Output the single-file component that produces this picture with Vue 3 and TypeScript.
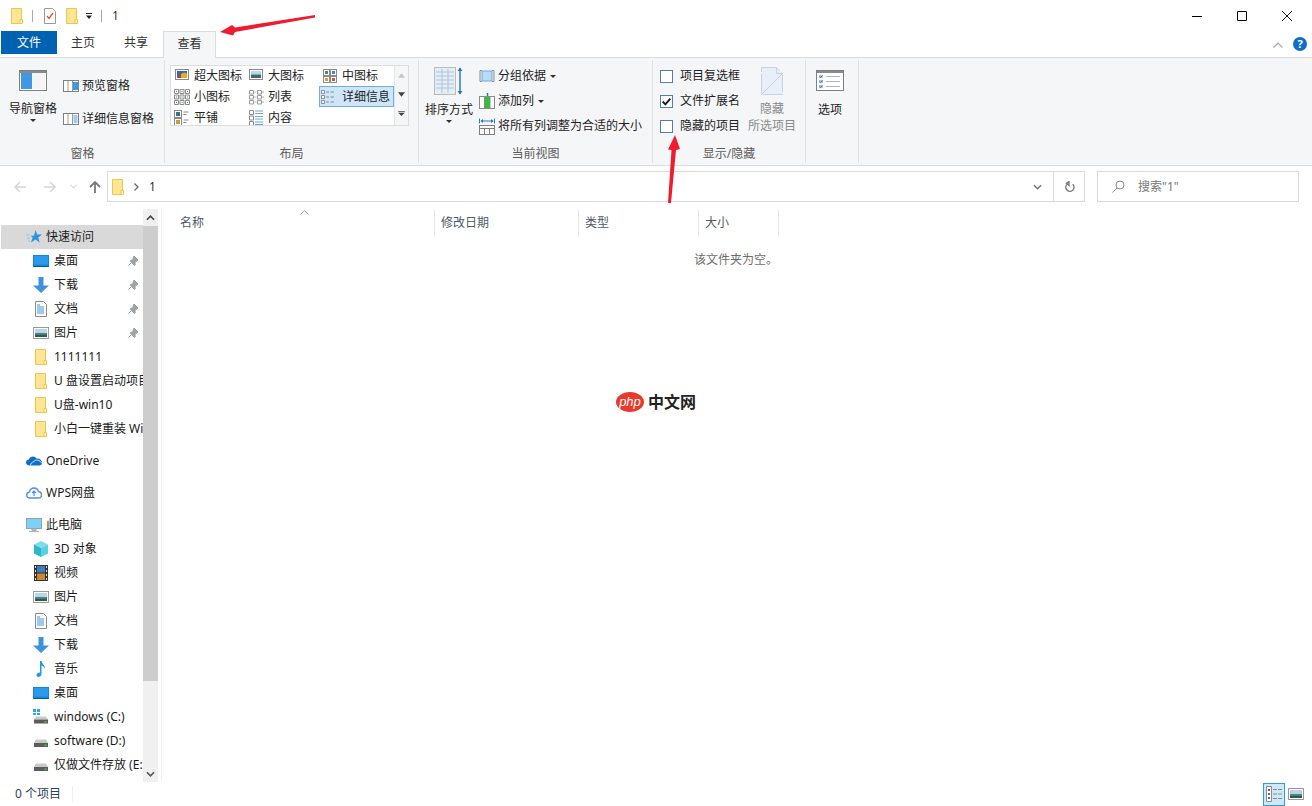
<template>
  <div class="explorer">
    <!-- shared icons -->
    <svg class="defs" aria-hidden="true">
      <symbol id="folder" viewBox="0 0 16 16">
        <path d="M2.5 .5h10v15h-10z" fill="#ffe694" stroke="#eac550" />
        <path d="M11 15.5v-4h2.5v4z" fill="#fff3c4" stroke="#eac550" />
      </symbol>
      <symbol id="desktop" viewBox="0 0 16 16">
        <rect x="0" y="2" width="16" height="11" fill="#0f86e0" />
        <rect x="1" y="3" width="14" height="8.5" fill="#2a9bec" />
        <path d="M0 13h16v1H0z" fill="#0a5a9c" />
      </symbol>
      <symbol id="download" viewBox="0 0 16 16">
        <path d="M5.5 0h5v8.5H16L8 16 0 8.5h5.5z" fill="#3f92de" />
      </symbol>
      <symbol id="doc" viewBox="0 0 16 16">
        <path d="M2.5 .5h8l3 3v12h-11z" fill="#fff" stroke="#8a8a8a" />
        <path d="M4 4h3M4 6h7M4 8h7M4 10h7M4 12h7" stroke="#3a94dc" fill="none" />
      </symbol>
      <symbol id="pic" viewBox="0 0 16 16">
        <rect x=".5" y="2.5" width="15" height="11" fill="#fff" stroke="#9a9a9a" />
        <rect x="2" y="4" width="12" height="4" fill="#b5d6ee" />
        <rect x="2" y="8" width="12" height="2" fill="#4f7f77" />
        <rect x="2" y="10" width="12" height="2" fill="#2d5a4c" />
      </symbol>
      <symbol id="pin" viewBox="0 0 12 12">
        <path d="M7 1l4 4-1 .5-2 2 .2 2.3-1 .5-4-4 .5-1L6 5l.5-3zM4.5 7.5L1.5 10.5" fill="#9aa1a8" stroke="#9aa1a8" />
      </symbol>
      <symbol id="star" viewBox="0 0 16 16">
        <path d="M9.5 1l1.7 4.5H16l-3.8 3 1.5 5-4.2-3-4.5 3 1.7-5-2.2-1.7h3.5z" fill="#2f93e3" />
        <path d="M0 6h4M1 9h3M2 12h2" stroke="#8fc6f2" />
      </symbol>
      <symbol id="onedrive" viewBox="0 0 16 16">
        <path d="M4 12.5c-2.5 0-4-1.2-4-3 0-1.5 1-2.5 2.5-2.7C3.2 4.8 5 3.5 7 3.5c1.5 0 2.8.7 3.5 2C13.5 5 16 7 16 9.8c0 1.7-1 2.7-2.5 2.7z" fill="#0f6fc6" />
        <path d="M4.5 12.5c0-2 1.5-3.5 3-3.5.8-1.5 2.5-2.3 4-1.8 2 .3 3.5 1.5 4 3" fill="none" stroke="#fff" stroke-width=".8" />
      </symbol>
      <symbol id="wps" viewBox="0 0 16 16">
        <path d="M4 13c-2 0-3.3-1.3-3.3-3 0-1.6 1.1-2.8 2.6-3C4 4.5 6 3 8 3s3.9 1.4 4.5 3.5c1.8.2 3 1.7 3 3.4 0 1.8-1.4 3.1-3.3 3.1z" fill="#fff" stroke="#4f8fe6" stroke-width="1.4" />
        <path d="M8 6v5M6 8l2-2 2 2" fill="none" stroke="#4f8fe6" stroke-width="1.2" />
      </symbol>
      <symbol id="pc" viewBox="0 0 16 16">
        <rect x=".5" y="1.5" width="15" height="10" fill="#7fd0f5" stroke="#8aa4b5" />
        <path d="M6 12h4v2H6zM3 14.5h10" fill="#a8b4bc" stroke="#a8b4bc" />
      </symbol>
      <symbol id="cube" viewBox="0 0 16 16">
        <path d="M8 0l7 3.5-7 3.5-7-3.5z" fill="#7fdcec" />
        <path d="M1 3.5l7 3.5v9l-7-3.5z" fill="#2cb6cc" />
        <path d="M15 3.5l-7 3.5v9l7-3.5z" fill="#5ccfe0" />
      </symbol>
      <symbol id="video" viewBox="0 0 16 16">
        <rect x="1" y="0" width="14" height="16" fill="#333" />
        <path d="M2 1h1v2H2zM2 5h1v2H2zM2 9h1v2H2zM2 13h1v2H2zM13 1h1v2h-1zM13 5h1v2h-1zM13 9h1v2h-1zM13 13h1v2h-1z" fill="#ddd" />
        <rect x="4" y="1" width="8" height="6.5" fill="#3c7ec0" />
        <rect x="4" y="8.5" width="8" height="6.5" fill="#d0852e" />
      </symbol>
      <symbol id="music" viewBox="0 0 16 16">
        <path d="M7 0h1.5c.3 3 4 4 3.5 8-.5-2-2-3-3.5-3.3V13c0 1.8-1.5 3-3.2 3C4.3 16 3.5 15.2 3.5 14c0-1.6 1.8-2.8 3.5-2.5z" fill="#1c9be6" />
      </symbol>
      <symbol id="disk" viewBox="0 0 16 16">
        <path d="M3 6.5h10l2 3.5H1z" fill="#c9c9c9" />
        <rect x="1" y="10" width="14" height="4" fill="#5c5c5c" />
        <rect x="11.5" y="11.5" width="2" height="1.5" fill="#37d04a" />
      </symbol>
      <symbol id="windisk" viewBox="0 0 16 16">
        <path d="M0 0h3v3H0zM4 0h3v3H4zM0 4h3v2H0zM4 4h3v2H4z" fill="#27a6ef" />
        <path d="M3 7.5h10l2 3H1z" fill="#c9c9c9" />
        <rect x="1" y="10.5" width="14" height="4" fill="#5c5c5c" />
        <rect x="11.5" y="12" width="2" height="1.5" fill="#37d04a" />
      </symbol>
      <symbol id="g-xl" viewBox="0 0 16 16">
        <rect x="1.5" y="1.5" width="13" height="10" fill="#fff" stroke="#8a8a8a" />
        <rect x="3" y="3" width="10" height="7" fill="#3767b0" />
        <path d="M3 10l2-3 2 1v2z" fill="#c83a2c" />
        <path d="M7 10V6l3-1.5 3 1V10z" fill="#e4b020" />
      </symbol>
      <symbol id="g-l" viewBox="0 0 16 16">
        <rect x="1.5" y="1.5" width="13" height="10" fill="#fff" stroke="#8a8a8a" />
        <rect x="3" y="3" width="10" height="3.5" fill="#b8d8ef" />
        <rect x="3" y="6.5" width="10" height="3.5" fill="#3f6d60" />
      </symbol>
      <symbol id="g-m" viewBox="0 0 16 16">
        <rect x="1.5" y="1.5" width="6" height="6" fill="#fff" stroke="#8a8a8a" />
        <rect x="8.5" y="1.5" width="6" height="6" fill="#fff" stroke="#8a8a8a" />
        <rect x="1.5" y="8.5" width="6" height="6" fill="#fff" stroke="#8a8a8a" />
        <rect x="8.5" y="8.5" width="6" height="6" fill="#fff" stroke="#8a8a8a" />
        <path d="M3 3h3v3H3z" fill="#4d8a6e" />
        <path d="M10 3h3v3h-3z" fill="#4a84c8" />
        <path d="M3 10h3v3H3z" fill="#d8a33a" />
        <path d="M10 10h3v3h-3z" fill="#c9553c" />
      </symbol>
      <symbol id="g-s" viewBox="0 0 16 16">
        <path d="M.5.5h4v4h-4zM6 .5h4v4H6zM11.5 .5h4v4h-4zM.5 6h4v4h-4zM6 6h4v4H6zM11.5 6h4v4h-4zM.5 11.5h4v4h-4zM6 11.5h4v4H6zM11.5 11.5h4v4h-4z" fill="#fff" stroke="#8a8a8a" />
        <path d="M2 2h1v1H2zM7.5 2h1v1h-1zM13 2h1v1h-1zM2 7.5h1v1H2zM7.5 7.5h1v1h-1zM13 7.5h1v1h-1zM2 13h1v1H2zM7.5 13h1v1h-1zM13 13h1v1h-1z" fill="#55729a" />
      </symbol>
      <symbol id="g-list" viewBox="0 0 16 16">
        <path d="M1.5 1.5h4V5h-4zM1.5 6.5h4V10h-4zM1.5 11.5h4V15h-4zM9.5 1.5h4V5h-4zM9.5 6.5h4V10h-4zM9.5 11.5h4V15h-4z" fill="#fff" stroke="#9a9a9a" />
        <path d="M6.5 3h2M6.5 8h2M6.5 13h2M14 3h2M14 8h2M14 13h2" stroke="#b0b0b0" />
      </symbol>
      <symbol id="g-detail" viewBox="0 0 16 16">
        <path d="M1.5 1.5h3v3h-3zM1.5 6.5h3v3h-3zM1.5 11.5h3v3h-3z" fill="#fff" stroke="#8a8a8a" />
        <path d="M6 3h3M10.5 3H14M6 8h3M10.5 8H14M6 13h3M10.5 13H14" stroke="#8a8a8a" />
      </symbol>
      <symbol id="g-tile" viewBox="0 0 16 16">
        <rect x=".5" y=".5" width="7" height="7" fill="#fff" stroke="#8a8a8a" />
        <rect x=".5" y="8.5" width="7" height="7" fill="#fff" stroke="#8a8a8a" />
        <path d="M2 2h4v4H2z" fill="#3f6d8a" />
        <path d="M2 10h4v4H2z" fill="#cc9a3a" />
        <path d="M9.5 2h5M9.5 4.5h3M9.5 10h5M9.5 12.5h3" stroke="#8a8a8a" />
      </symbol>
      <symbol id="g-content" viewBox="0 0 16 16">
        <path d="M1.5 .5h4v4h-4zM1.5 6h4v4h-4zM1.5 11.5h4v4h-4z" fill="#fff" stroke="#8a8a8a" />
        <path d="M7 1h8M7 3.5h8M7 6.5h8M7 9h8M7 12h8M7 14.5h8" stroke="#6aa6dc" />
      </symbol>
    </svg>

    <header class="titlebar">
      <svg class="qa-icon"><use href="#folder" /></svg>
      <span class="qa-sep" />
      <svg class="qa-icon check-doc" viewBox="0 0 16 16">
        <path d="M2.5 .5h8l3 3v12h-11z" fill="#fff" stroke="#9a9a9a" />
        <path d="M5 8l2 2.5L11 5" fill="none" stroke="#e0532a" stroke-width="1.3" />
      </svg>
      <svg class="qa-icon second"><use href="#folder" /></svg>
      <svg class="qa-drop" viewBox="0 0 8 8">
        <path d="M1 1h6v1H1zM1 3.5h6L4 7z" fill="#222" />
      </svg>
      <span class="qa-sep last" />
      <span class="title">1</span>
      <div class="win-btns">
        <svg viewBox="0 0 10 10"><path d="M0 5.5h10" stroke="#000" /></svg>
        <svg viewBox="0 0 10 10"><path d="M.5.5h9v9h-9z" fill="none" stroke="#000" /></svg>
        <svg viewBox="0 0 10 10"><path d="M0 0l10 10M10 0L0 10" stroke="#000" stroke-width=".9" /></svg>
      </div>
    </header>

    <nav class="tabs">
      <span class="tab file">文件</span>
      <span class="tab home">主页</span>
      <span class="tab share">共享</span>
      <span class="tab active">查看</span>
      <svg class="collapse" viewBox="0 0 10 6"><path d="M.5 5.5L5 1l4.5 4.5" fill="none" stroke="#a8a8a8" stroke-width="1.2" /></svg>
      <span class="help">?</span>
    </nav>

    <section class="ribbon">
      <div class="group g-pane">
        <div class="group-body">
          <div class="big nav-btn">
            <svg class="big-icon" viewBox="0 0 28 21" width="28" height="21">
              <rect x=".5" y=".5" width="27" height="20" fill="#fff" stroke="#7f7f7f" />
              <rect x="1" y="1" width="26" height="2" fill="#8a8a8a" />
              <rect x="2" y="3" width="11" height="16" fill="#3f97e5" />
              <rect x="13" y="3" width="13" height="16" fill="#f4f4f4" />
            </svg>
            <span class="big-label">导航窗格</span>
            <i class="caret" />
          </div>
          <div class="pane-list">
            <div class="small-item">
              <svg viewBox="0 0 16 12" width="16" height="12">
                <rect x=".5" y=".5" width="15" height="11" fill="#fff" stroke="#7f7f7f" />
                <rect x="10" y="2" width="5" height="8" fill="#3f97e5" />
                <path d="M5 1v10M9.5 1v10" stroke="#9a9a9a" />
              </svg>
              <span>预览窗格</span>
            </div>
            <div class="small-item">
              <svg viewBox="0 0 16 12" width="16" height="12">
                <rect x=".5" y=".5" width="15" height="11" fill="#fff" stroke="#7f7f7f" />
                <path d="M5 1v10M9.5 1v10" stroke="#9a9a9a" />
                <path d="M10.5 3h4M10.5 5h4M10.5 7h4M10.5 9h4" stroke="#3f97e5" />
              </svg>
              <span>详细信息窗格</span>
            </div>
          </div>
        </div>
        <div class="group-label">窗格</div>
      </div>

      <div class="group g-layout">
        <div class="group-body">
          <div class="gallery">
            <div class="gallery-grid">
              <div v-for="g in layouts" :key="g.label" class="gallery-item" :class="{ selected: g.selected }">
                <svg class="g-icon"><use :href="'#' + g.icon" /></svg>
                <span>{{ g.label }}</span>
              </div>
            </div>
            <div class="gallery-scroll">
              <svg viewBox="0 0 8 5" class="off"><path d="M4 0l4 5H0z" fill="#c4c4c4" /></svg>
              <svg viewBox="0 0 8 5"><path d="M0 0h8L4 5z" fill="#444" /></svg>
              <svg viewBox="0 0 8 6"><path d="M0 0h8v1H0zM0 2h8L4 6z" fill="#444" /></svg>
            </div>
          </div>
        </div>
        <div class="group-label">布局</div>
      </div>

      <div class="group g-view">
        <div class="group-body">
          <div class="big sort-btn">
            <svg viewBox="0 0 30 28" width="30" height="28">
              <rect x=".5" y=".5" width="21" height="27" fill="#e6eef4" stroke="#b5bcc2" />
              <path d="M2 5h18M2 9h18M2 13h18M2 17h18M2 21h18M8 2v24M14 2v24" stroke="#a9c6da" />
              <path d="M26 1v26" stroke="#2b78c2" stroke-width="1.5" />
              <path d="M23.5 4L26 .5 28.5 4zM23.5 24L26 27.5 28.5 24z" fill="#2b78c2" />
            </svg>
            <span class="big-label">排序方式</span>
            <i class="caret" />
          </div>
          <div class="view-list">
            <div class="small-item">
              <svg viewBox="0 0 16 16" width="16" height="16">
                <path d="M3 2.5H1v11h2M13 2.5h2v11h-2" fill="none" stroke="#8a8a8a" />
                <rect x="3" y="3" width="10" height="10" fill="#b9dcf6" stroke="#6ca8dc" />
              </svg>
              <span>分组依据</span>
              <i class="caret inline" />
            </div>
            <div class="small-item">
              <svg viewBox="0 0 16 16" width="16" height="16">
                <rect x=".5" y="3.5" width="15" height="12" fill="#fff" stroke="#8a8a8a" />
                <rect x="6" y="4" width="5" height="11" fill="#2fc239" />
                <path d="M5.5 4v11M11 4v11" stroke="#8a8a8a" />
                <path d="M8.5 0v3" stroke="#2b78c2" stroke-width="1.5" />
              </svg>
              <span>添加列</span>
              <i class="caret inline" />
            </div>
            <div class="small-item">
              <svg viewBox="0 0 16 17" width="16" height="17">
                <path d="M.5 .5v5M15.5 .5v5M2 3h12" stroke="#2b78c2" fill="none" />
                <path d="M4 1L1.5 3 4 5zM12 1l2.5 2L12 5z" fill="#2b78c2" />
                <rect x=".5" y="7.5" width="15" height="9" fill="#fff" stroke="#7f7f7f" />
                <path d="M1 10.5h14M5.5 11v5M10.5 11v5" stroke="#7f7f7f" />
              </svg>
              <span>将所有列调整为合适的大小</span>
            </div>
          </div>
        </div>
        <div class="group-label">当前视图</div>
      </div>

      <div class="group g-show">
        <div class="group-body">
          <div class="check-list">
            <label v-for="c in checks" :key="c.label" class="check-row">
              <span class="box">
                <svg v-if="c.on" viewBox="0 0 13 13" width="11" height="11"><path d="M2 6.5l3.2 3.3L11 3" fill="none" stroke="#1a1a1a" stroke-width="2.2" /></svg>
              </span>
              <span>{{ c.label }}</span>
            </label>
          </div>
          <div class="hide-sel">
            <svg viewBox="0 0 22 28" width="22" height="28">
              <path d="M.5 .5h15l6 6v21H.5z" fill="#e8eff9" stroke="#c8d2e2" stroke-dasharray="20 2" />
              <path d="M15.5 .5v6h6M.5 27.5L21 7" fill="none" stroke="#c8d2e2" />
            </svg>
            <span class="hide-a">隐藏</span>
            <span class="hide-b">所选项目</span>
          </div>
        </div>
        <div class="group-label">显示/隐藏</div>
      </div>

      <div class="group g-opt">
        <div class="group-body">
          <div class="big opt-btn">
            <svg viewBox="0 0 28 21" width="28" height="21">
              <rect x=".5" y=".5" width="27" height="20" fill="#fff" stroke="#7f7f7f" />
              <rect x="1" y="1" width="26" height="2" fill="#8a8a8a" />
              <path d="M3 5h4v3H3zM3 10h4v3H3zM3 15h4v3H3z" fill="#9cc6ec" />
              <path d="M3.5 6.5l1 1 2-2M3.5 11.5l1 1 2-2M3.5 16.5l1 1 2-2" fill="none" stroke="#2b78c2" />
              <path d="M10 6.5h14M10 11.5h14M10 16.5h14" stroke="#b5b5b5" />
            </svg>
            <span class="big-label">选项</span>
          </div>
        </div>
      </div>
    </section>

    <section class="addressbar">
      <div class="arrows">
        <svg viewBox="0 0 12 12" width="12" height="12"><path d="M12 6H1M6 1L1 6l5 5" fill="none" stroke="#d6d6d6" stroke-width="1.5" /></svg>
        <svg viewBox="0 0 12 12" width="12" height="12"><path d="M0 6h11M6 1l5 5-5 5" fill="none" stroke="#d6d6d6" stroke-width="1.5" /></svg>
        <svg viewBox="0 0 8 5" width="7" height="5"><path d="M.5.5L4 4 7.5.5" fill="none" stroke="#d6d6d6" stroke-width="1.2" /></svg>
        <svg viewBox="0 0 12 12" width="12" height="12"><path d="M6 12V1M1 6l5-5 5 5" fill="none" stroke="#7a7a7a" stroke-width="1.8" /></svg>
      </div>
      <div class="path-box">
        <svg class="path-folder"><use href="#folder" /></svg>
        <svg class="crumb" viewBox="0 0 5 8" width="5" height="8"><path d="M.5.5L4 4 .5 7.5" fill="none" stroke="#666" stroke-width="1.2" /></svg>
        <span class="path-text">1</span>
        <span class="path-drop">
          <svg viewBox="0 0 10 6" width="9" height="6"><path d="M1 1l4 4 4-4" fill="none" stroke="#777" stroke-width="1.6" /></svg>
        </span>
        <span class="path-refresh">
          <svg viewBox="0 0 12 12" width="11" height="12"><path d="M4.5 2.2A4.5 4.5 0 1 0 9.5 3M5.5 0v4.2L2.8 2z" fill="none" stroke="#7a7a7a" stroke-width="1.5" /></svg>
        </span>
      </div>
      <div class="search-box">
        <svg viewBox="0 0 13 13" width="13" height="13"><circle cx="8" cy="5" r="4" fill="none" stroke="#8a8a8a" /><path d="M5 8L.5 12.5" stroke="#8a8a8a" /></svg>
        <span>搜索"1"</span>
      </div>
    </section>

    <main class="content">
      <aside class="nav">
        <div class="nav-list">
          <div
            v-for="(item, i) in navItems"
            :key="i"
            class="nav-row"
            :class="[item.level === 1 ? 'top' : 'sub', { current: item.current, spaced: item.spaced }]"
          >
            <svg class="nav-icon"><use :href="'#' + item.icon" /></svg>
            <span>{{ item.label }}</span>
            <svg v-if="item.pinned" class="pin"><use href="#pin" /></svg>
          </div>
        </div>
        <div class="scrollbar">
          <div class="sb-btn">
            <svg viewBox="0 0 10 6" width="9" height="6"><path d="M1 5l4-4 4 4" fill="none" stroke="#444" stroke-width="1.8" /></svg>
          </div>
          <div class="sb-thumb" />
          <div class="sb-track" />
          <div class="sb-btn">
            <svg viewBox="0 0 10 6" width="9" height="6"><path d="M1 1l4 4 4-4" fill="none" stroke="#555" stroke-width="1.8" /></svg>
          </div>
        </div>
      </aside>
      <div class="files">
        <div class="file-head">
          <div v-for="col in columns" :key="col" class="col">{{ col }}</div>
          <svg class="sort-mark" viewBox="0 0 9 5" width="9" height="5"><path d="M.5 4.5l4-4 4 4" fill="none" stroke="#9a9a9a" /></svg>
        </div>
        <p class="empty">该文件夹为空。</p>
      </div>
    </main>

    <footer class="statusbar">
      <span class="count">0 个项目</span>
      <span class="status-sep" />
      <div class="view-btns">
        <span class="vb on">
          <svg viewBox="0 0 16 16" width="16" height="16">
            <path d="M.5 .5h5v15h-5z" fill="#fff" stroke="#8a8a8a" />
            <path d="M2 3h2v2H2zM2 7h2v2H2zM2 11h2v2H2z" fill="#666" />
            <path d="M7 3.5h4M12 3.5h4M7 8h4M12 8h4M7 12.5h4M12 12.5h4" stroke="#8a8a8a" />
          </svg>
        </span>
        <svg class="vb-pic"><use href="#pic" /></svg>
      </div>
    </footer>

    <!-- annotations drawn over the window -->
    <svg class="marks" viewBox="0 0 1312 806">
      <path d="M315 15L235 27.5 232 25 220 32 233 35.5 235 32 315 17.5z" fill="#ee1c2e" />
      <path d="M668 203L671 203 676 150 680 149 675 135 668 149.5 671.5 150z" fill="#ee1c2e" />
    </svg>
    <div class="watermark">
      <span class="wm-php">php</span>
      <span class="wm-cn">中文网</span>
    </div>
  </div>
</template>

<script setup lang="ts">
interface NavItem {
  label: string
  icon: string
  level: number
  pinned?: boolean
  current?: boolean
  spaced?: boolean
}

const layouts = [
  { label: '超大图标', icon: 'g-xl' },
  { label: '大图标', icon: 'g-l' },
  { label: '中图标', icon: 'g-m' },
  { label: '小图标', icon: 'g-s' },
  { label: '列表', icon: 'g-list' },
  { label: '详细信息', icon: 'g-detail', selected: true },
  { label: '平铺', icon: 'g-tile' },
  { label: '内容', icon: 'g-content' },
]

const checks = [
  { label: '项目复选框', on: false },
  { label: '文件扩展名', on: true },
  { label: '隐藏的项目', on: false },
]

const columns = ['名称', '修改日期', '类型', '大小']

const navItems: NavItem[] = [
  { label: '快速访问', icon: 'star', level: 1, current: true },
  { label: '桌面', icon: 'desktop', level: 2, pinned: true },
  { label: '下载', icon: 'download', level: 2, pinned: true },
  { label: '文档', icon: 'doc', level: 2, pinned: true },
  { label: '图片', icon: 'pic', level: 2, pinned: true },
  { label: '1111111', icon: 'folder', level: 2 },
  { label: 'U 盘设置启动项目', icon: 'folder', level: 2 },
  { label: 'U盘-win10', icon: 'folder', level: 2 },
  { label: '小白一键重装 Win10', icon: 'folder', level: 2 },
  { label: 'OneDrive', icon: 'onedrive', level: 1, spaced: true },
  { label: 'WPS网盘', icon: 'wps', level: 1, spaced: true },
  { label: '此电脑', icon: 'pc', level: 1, spaced: true },
  { label: '3D 对象', icon: 'cube', level: 2 },
  { label: '视频', icon: 'video', level: 2 },
  { label: '图片', icon: 'pic', level: 2 },
  { label: '文档', icon: 'doc', level: 2 },
  { label: '下载', icon: 'download', level: 2 },
  { label: '音乐', icon: 'music', level: 2 },
  { label: '桌面', icon: 'desktop', level: 2 },
  { label: 'windows (C:)', icon: 'windisk', level: 2 },
  { label: 'software (D:)', icon: 'disk', level: 2 },
  { label: '仅做文件存放 (E:)', icon: 'disk', level: 2 },
]
</script>

<style>
html,
body {
  margin: 0;
  background: #fff;
  overflow: hidden;
}
</style>

<style scoped>
.explorer {
  position: relative;
  width: 1312px;
  height: 806px;
  display: flex;
  flex-direction: column;
  overflow: hidden;
  background: #fff;
  color: #222;
  font-family: "Noto Sans", "Noto Sans CJK SC", sans-serif;
  font-size: 12px;
  line-height: 16px;
}

.defs {
  position: absolute;
  width: 0;
  height: 0;
}

/* title bar */
.titlebar {
  height: 31px;
  flex: none;
  display: flex;
  align-items: center;
  padding-left: 9px;
}

.qa-icon {
  width: 16px;
  height: 16px;
}

.qa-sep {
  width: 1px;
  height: 12px;
  background: #a8a8a8;
  margin-left: 7px;
}

.check-doc {
  margin-left: 9px;
}

.second {
  margin-left: 6px;
}

.qa-drop {
  width: 8px;
  height: 8px;
  margin-left: 5px;
}

.qa-sep.last {
  margin-left: 8px;
}

.title {
  margin-left: 10px;
  color: #333;
}

.win-btns {
  margin-left: auto;
  display: flex;
  gap: 35px;
  padding-right: 20px;
}

.win-btns svg {
  width: 10px;
  height: 10px;
}

/* tabs */
.tabs {
  height: 26px;
  flex: none;
  display: flex;
  position: relative;
  padding-left: 1px;
  z-index: 1;
}

.tab {
  height: 23px;
  line-height: 23px;
  text-align: center;
  color: #333;
}

.file {
  width: 56px;
  background: #0063b1;
  color: #fff;
}

.home {
  width: 52px;
}

.share {
  width: 54px;
}

.active {
  width: 51px;
  height: 26px;
  line-height: 24px;
  background: #f5f6f7;
  border: 1px solid #dadbdc;
  border-bottom: none;
}

.collapse {
  width: 10px;
  height: 6px;
  margin: 11px 0 0 auto;
}

.help {
  width: 14px;
  height: 14px;
  margin: 6px 5px 0 10px;
  border-radius: 50%;
  background: #0f6fc6;
  color: #fff;
  font-size: 11px;
  font-weight: 700;
  line-height: 14px;
  text-align: center;
}

/* ribbon */
.ribbon {
  height: 109px;
  flex: none;
  box-sizing: border-box;
  display: flex;
  padding: 2px 0 2px 1px;
  background: #f5f6f7;
  border-top: 1px solid #dadbdc;
  border-bottom: 1px solid #dadbdc;
}

.group {
  box-sizing: border-box;
  display: flex;
  flex-direction: column;
  border-right: 1px solid #e1e2e3;
}

.group-body {
  flex: 1;
  display: flex;
  min-height: 0;
}

.group-label {
  height: 22px;
  line-height: 26px;
  text-align: center;
  color: #5c5c5c;
}

.g-pane {
  width: 164px;
}

.g-layout {
  width: 254px;
}

.g-view {
  width: 234px;
}

.g-show {
  width: 153px;
}

.g-opt {
  width: 53px;
}

.big {
  display: flex;
  flex-direction: column;
  align-items: center;
  width: 48px;
}

.big-label {
  white-space: nowrap;
}

.caret {
  display: block;
  width: 0;
  height: 0;
  border-left: 3px solid transparent;
  border-right: 3px solid transparent;
  border-top: 3px solid #333;
  margin-top: 2px;
}

.caret.inline {
  margin: 1px 0 0 1px;
}

.nav-btn {
  margin-left: 8px;
  padding-top: 10px;
}

.nav-btn .big-label {
  margin-top: 10px;
}

.pane-list {
  margin-left: 6px;
  padding-top: 18px;
  display: flex;
  flex-direction: column;
  gap: 17px;
}

.small-item {
  display: flex;
  align-items: center;
  gap: 3px;
  height: 16px;
  white-space: nowrap;
}

.gallery {
  display: flex;
  width: 239px;
  height: 61px;
  box-sizing: border-box;
  margin: 5px 0 0 5px;
  background: #fff;
  border: 1px solid #dcdddf;
  overflow: hidden;
}

.gallery-grid {
  width: 223px;
  height: 80px;
  margin-top: -1px;
  display: grid;
  grid-template-columns: 74px 74px 75px;
  grid-auto-rows: 21px;
}

.gallery-item {
  display: flex;
  align-items: center;
  gap: 4px;
  padding-left: 3px;
  box-sizing: border-box;
}

.g-icon {
  width: 16px;
  height: 16px;
  flex: none;
}

.gallery-item.selected {
  background: #cde6fa;
  border: 1px solid #72aee6;
  padding-left: 0;
  gap: 6px;
}

.gallery-scroll {
  flex: 1;
  background: #f5f6f7;
  border-left: 1px solid #e4e5e6;
  display: flex;
  flex-direction: column;
  align-items: center;
  gap: 14px;
  padding-top: 7px;
}

.gallery-scroll svg {
  width: 7px;
  height: 5px;
  flex: none;
}

.sort-btn {
  margin-left: 6px;
  padding-top: 7px;
}

.sort-btn .big-label {
  margin-top: 7px;
}

.view-list,
.check-list {
  display: flex;
  flex-direction: column;
  gap: 9px;
  padding-top: 8px;
}

.view-list {
  margin-left: 6px;
}

.check-list {
  margin-left: 7px;
  width: 88px;
  flex: none;
}

.check-row {
  display: flex;
  align-items: center;
  gap: 7px;
  height: 16px;
  white-space: nowrap;
}

.box {
  width: 13px;
  height: 13px;
  box-sizing: border-box;
  background: #fff;
  border: 1px solid #5a7ba6;
  display: flex;
  align-items: center;
  justify-content: center;
}

.hide-sel {
  width: 48px;
  display: flex;
  flex-direction: column;
  align-items: center;
  padding-top: 7px;
  color: #8a8a8a;
  white-space: nowrap;
}

.hide-a {
  margin-top: 6px;
}

.hide-b {
  margin-top: 1px;
}

.opt-btn {
  width: 48px;
  padding-top: 10px;
}

.opt-btn svg {
  margin-left: 0;
}

.opt-btn .big-label {
  margin-top: 11px;
}

/* address row */
.addressbar {
  height: 42px;
  flex: none;
  display: flex;
  align-items: flex-start;
  padding-top: 5px;
  box-sizing: border-box;
}

.arrows {
  width: 107px;
  height: 31px;
  flex: none;
  display: flex;
  align-items: center;
  padding-left: 14px;
  box-sizing: border-box;
  gap: 18px;
}

.arrows svg:nth-child(3) {
  margin-left: -4px;
}

.arrows svg:nth-child(4) {
  margin-left: -6px;
}

.path-box {
  width: 978px;
  height: 31px;
  box-sizing: border-box;
  flex: none;
  display: flex;
  align-items: center;
  border: 1px solid #d9d9d9;
  padding-left: 2px;
}

.path-folder {
  width: 16px;
  height: 16px;
}

.crumb {
  margin-left: 8px;
}

.path-text {
  margin-left: 10px;
  color: #333;
}

.path-drop,
.path-refresh {
  height: 100%;
  display: flex;
  align-items: center;
  justify-content: center;
}

.path-drop {
  margin-left: auto;
  width: 31px;
  border-right: 1px solid #d9d9d9;
}

.path-refresh {
  width: 30px;
}

.search-box {
  margin-left: 12px;
  width: 202px;
  height: 31px;
  box-sizing: border-box;
  border: 1px solid #d9d9d9;
  display: flex;
  align-items: center;
  gap: 13px;
  padding-left: 14px;
  color: #777;
}

/* main */
.content {
  flex: 1;
  min-height: 0;
  display: flex;
}

.nav {
  width: 162px;
  flex: none;
  box-sizing: border-box;
  display: flex;
  border-right: 1px solid #f0f0f0;
  padding-right: 3px;
}

.nav-list {
  width: 143px;
  flex: none;
  overflow: hidden;
  padding-top: 17px;
  box-sizing: border-box;
}

.nav-row {
  height: 24px;
  display: flex;
  align-items: center;
  position: relative;
  white-space: nowrap;
  color: #1a1a1a;
}

.nav-row.top {
  margin-left: 1px;
  padding-left: 25px;
}

.nav-row.sub {
  padding-left: 33px;
}

.nav-row.spaced {
  margin-top: 8px;
}

.nav-row.current {
  background: #d9d9d9;
}

.nav-icon {
  width: 16px;
  height: 16px;
  flex: none;
}

.nav-row.top .nav-icon {
  margin-right: 4px;
}

.nav-row.sub .nav-icon {
  margin-right: 5px;
}

.pin {
  position: absolute;
  left: 127px;
  top: 6px;
  width: 12px;
  height: 12px;
}

.scrollbar {
  width: 15px;
  flex: none;
  display: flex;
  flex-direction: column;
  background: #f0f0f0;
  margin-top: 1px;
}

.sb-btn {
  height: 17px;
  flex: none;
  display: flex;
  align-items: center;
  justify-content: center;
}

.sb-thumb {
  height: 455px;
  flex: none;
  background: #cdcdcd;
}

.sb-track {
  flex: 1;
}

.files {
  flex: 1;
  min-width: 0;
  display: flex;
  flex-direction: column;
}

.file-head {
  position: relative;
  display: grid;
  grid-template-columns: 261px 144px 120px 80px;
  width: fit-content;
  height: 27px;
  margin: 2px 0 0 12px;
}

.col {
  box-sizing: border-box;
  padding-left: 6px;
  line-height: 26px;
  color: #4c5a6a;
  border-right: 1px solid #e5e5e5;
}

.sort-mark {
  position: absolute;
  left: 126px;
  top: 0;
}

.empty {
  margin: 15px 0 0;
  padding-right: 2px;
  text-align: center;
  color: #6d6d6d;
}

/* status bar */
.statusbar {
  height: 24px;
  flex: none;
  display: flex;
  align-items: center;
  padding-left: 15px;
  color: #2e3f58;
}

.count {
  width: 57px;
  flex: none;
}

.status-sep {
  width: 1px;
  height: 16px;
  background: #f0f0f0;
}

.view-btns {
  margin-left: auto;
  display: flex;
  align-items: center;
  gap: 3px;
  padding-right: 8px;
}

.vb {
  width: 22px;
  height: 23px;
  box-sizing: border-box;
  display: flex;
  align-items: center;
  justify-content: center;
  background: #cde8f7;
  border: 1px solid #2b9fe0;
}

.vb-pic {
  width: 16px;
  height: 16px;
}

/* overlays */
.marks {
  position: absolute;
  left: 0;
  top: 0;
  width: 1312px;
  height: 806px;
  pointer-events: none;
  z-index: 2;
}

.watermark {
  position: absolute;
  left: 616px;
  top: 392px;
  display: flex;
  align-items: center;
  gap: 4px;
  z-index: 2;
}

.wm-php {
  width: 28px;
  height: 20px;
  border-radius: 50%;
  background: #e8392c;
  color: #fff;
  font-family: "Liberation Sans", sans-serif;
  font-size: 13px;
  font-style: italic;
  line-height: 19px;
  text-align: center;
}

.wm-cn {
  font-size: 16px;
  font-weight: 700;
  color: #222;
  line-height: 20px;
}
</style>
